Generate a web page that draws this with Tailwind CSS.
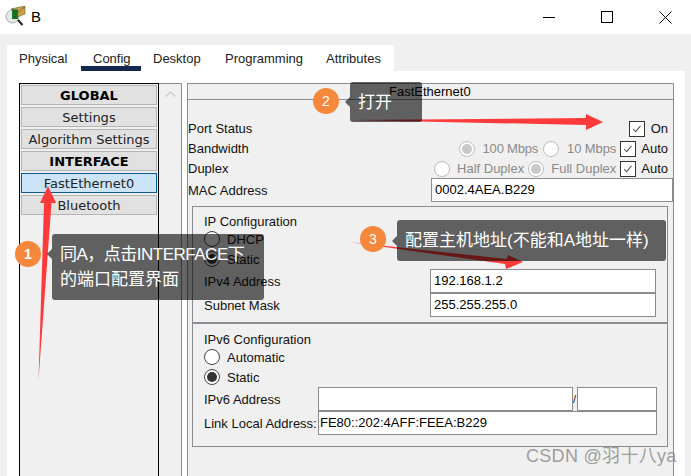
<!DOCTYPE html>
<html lang="zh">
<head>
<meta charset="utf-8">
<title>B</title>
<script src="https://cdn.jsdelivr.net/npm/@tailwindcss/browser@4"></script>
</head>
<body class="bg-[#f0f0f0]">
<div class="relative h-[476px] w-[691px] overflow-hidden bg-[#f0f0f0] font-['Liberation_Sans',sans-serif] text-[13px] text-[#111]">

  <!-- Title bar -->
  <header class="flex h-[34px] items-center justify-between bg-white">
    <div class="flex items-center">
      <svg class="ml-[5px] h-[22px] w-[22px]" viewBox="0 0 22 22">
        <circle cx="7.500" cy="10.500" r="6.500" fill="#e4e9e7" stroke="#a9b3b0"/>
        <path d="M13 14l4.500 5" stroke="#222" stroke-width="2"/>
        <path d="M6 3l14-3v8l-8 3z" fill="#c9a14f" stroke="#6d5a2a" stroke-width=".6"/>
        <path d="M7 2.500l6 4 7-6" fill="none" stroke="#6d5a2a" stroke-width=".8"/>
        <path d="M7 3.500h6v9.500h-6z" fill="#1c7a2b"/>
        <path d="M9 4v9M11 4v9" stroke="#0c3d14" stroke-width=".8" stroke-dasharray="1 1"/>
      </svg>
      <span class="ml-[4px] text-[15px] text-black">B</span>
    </div>
    <div class="mr-[19px] flex items-center gap-[46px]">
      <span class="h-px w-[12px] bg-black"></span>
      <span class="h-[12px] w-[12px] border border-black"></span>
      <svg class="h-[13px] w-[13px]" viewBox="0 0 13 13"><path d="M.5.5l12 12M12.500.5l-12 12" stroke="#000" fill="none"/></svg>
    </div>
  </header>

  <!-- Tabs -->
  <nav class="mt-[11px] ml-[7px] flex h-[26px] w-[387px] bg-white pt-[4px] text-[#222]">
    <span class="ml-[12px] w-[50px]">Physical</span>
    <span class="relative ml-[24px] w-[36px]">Config<span class="absolute top-[17px] left-[-12px] h-[5px] w-[60px] bg-[#14284f]"></span></span>
    <span class="ml-[24px] w-[48px]">Desktop</span>
    <span class="ml-[24px] w-[77px]">Programming</span>
    <span class="ml-[24px] w-[55px]">Attributes</span>
  </nav>

  <!-- Main panel -->
  <main class="ml-[7px] flex h-[405px] w-[678px] bg-white pt-[12px] pl-[12px]">

    <!-- Left list -->
    <aside class="flex h-[500px] w-[140px] flex-col gap-[2px] border border-black bg-[#f0f0f0] p-px font-['DejaVu_Sans',sans-serif] text-[13px] leading-[20px] text-[#222]">
      <div class="h-[20px] border border-[#b5b5b5] bg-[#e1e1e1] text-center font-bold text-black">GLOBAL</div>
      <div class="h-[20px] border border-[#b5b5b5] bg-[#e1e1e1] text-center">Settings</div>
      <div class="h-[20px] border border-[#b5b5b5] bg-[#e1e1e1] text-center">Algorithm Settings</div>
      <div class="h-[20px] border border-[#b5b5b5] bg-[#e1e1e1] text-center font-bold text-black">INTERFACE</div>
      <div class="h-[20px] border border-[#0a5a96] bg-[#cce4f7] text-center">FastEthernet0</div>
      <div class="h-[20px] border border-[#b5b5b5] bg-[#e1e1e1] text-center">Bluetooth</div>
    </aside>

    <!-- Scroll column -->
    <div class="flex h-[500px] w-[23px] justify-center border-t border-r border-[#8a8c92] bg-[#f0f0f0] pt-[7px]">
      <svg class="h-[6px] w-[11px]" viewBox="0 0 11 6"><path d="M.7 5.500l4.800-4.500 4.800 4.500" fill="none" stroke="#cdcdcd" stroke-width="1.500"/></svg>
    </div>

    <!-- Right form -->
    <section class="ml-[5px] h-[500px] w-[487px] border-t border-r border-l border-[#8a8c92] bg-[#f0f0f0] leading-[17px]">
      <div class="h-[16px] border-b border-[#8a8c92] bg-[#f0f0f0] pl-[201px] text-[13px] leading-[16px] text-black">FastEthernet0</div>

      <div class="mt-[18px] flex h-[20px] items-center justify-between pt-px">
        <span>Port Status</span>
        <div class="mr-[5px] flex items-center gap-[6px]">
          <svg class="h-[16px] w-[16px] border border-[#333] bg-white" viewBox="0 0 16 16"><path d="M3.500 8l3 3 5.500-6.500" fill="none" stroke="#555" stroke-width="1.200"/></svg>
          <span>On</span>
        </div>
      </div>

      <div class="flex h-[20px] items-center pt-px">
        <span class="mr-auto">Bandwidth</span>
        <span class="flex h-[16px] w-[16px] items-center justify-center rounded-full border border-[#bbb] bg-white"><span class="h-[10px] w-[10px] rounded-full bg-[#c8c8c8]"></span></span>
        <span class="ml-[8px] tracking-[-0.2px] text-[#8a8a8a]">100 Mbps</span>
        <span class="ml-[5px] h-[16px] w-[16px] rounded-full border border-[#bbb] bg-white"></span>
        <span class="ml-[8px] tracking-[-0.1px] text-[#8a8a8a]">10 Mbps</span>
        <svg class="ml-[4px] h-[16px] w-[16px] border border-[#333] bg-white" viewBox="0 0 16 16"><path d="M3.500 8l3 3 5.500-6.500" fill="none" stroke="#555" stroke-width="1.200"/></svg>
        <span class="mr-[5px] ml-[5px]">Auto</span>
      </div>

      <div class="flex h-[20px] items-center pt-px">
        <span class="mr-auto">Duplex</span>
        <span class="h-[16px] w-[16px] rounded-full border border-[#bbb] bg-white"></span>
        <span class="ml-[7px] text-[#8a8a8a]">Half Duplex</span>
        <span class="ml-[4px] flex h-[16px] w-[16px] items-center justify-center rounded-full border border-[#bbb] bg-white"><span class="h-[10px] w-[10px] rounded-full bg-[#c8c8c8]"></span></span>
        <span class="ml-[7px] text-[#8a8a8a]">Full Duplex</span>
        <svg class="ml-[4px] h-[16px] w-[16px] border border-[#333] bg-white" viewBox="0 0 16 16"><path d="M3.500 8l3 3 5.500-6.500" fill="none" stroke="#555" stroke-width="1.200"/></svg>
        <span class="mr-[5px] ml-[5px]">Auto</span>
      </div>

      <div class="flex h-[24px] items-center justify-between">
        <span class="pt-px">MAC Address</span>
        <div class="h-[24px] w-[242px] border border-[#8a8c92] bg-white pl-[3px] leading-[22px] text-black">0002.4AEA.B229</div>
      </div>

      <!-- IP Configuration -->
      <div class="mt-[4px] mr-[5px] ml-[4px] h-[118px] border border-b-2 border-[#8a8c92] pl-[11px]">
        <div class="flex h-[22px] items-center pt-[6px]">IP Configuration</div>
        <div class="flex h-[20px] items-center">
          <span class="h-[16px] w-[16px] rounded-full border border-[#444] bg-white"></span>
          <span class="ml-[7px]">DHCP</span>
        </div>
        <div class="flex h-[20px] items-center">
          <span class="flex h-[16px] w-[16px] items-center justify-center rounded-full border border-[#444] bg-white"><span class="h-[10px] w-[10px] rounded-full bg-[#333]"></span></span>
          <span class="ml-[7px]">Static</span>
        </div>
        <div class="flex h-[24px] items-center justify-between pr-[11px]">
          <span>IPv4 Address</span>
          <div class="h-[24px] w-[226px] border border-[#8a8c92] bg-white pl-[3px] leading-[22px] text-black">192.168.1.2</div>
        </div>
        <div class="flex h-[24px] items-center justify-between pr-[11px]">
          <span>Subnet Mask</span>
          <div class="h-[24px] w-[226px] border border-[#8a8c92] bg-white pl-[3px] leading-[22px] text-black">255.255.255.0</div>
        </div>
      </div>

      <!-- IPv6 Configuration -->
      <div class="mr-[5px] ml-[4px] h-[123px] border border-t-0 border-[#8a8c92] pl-[11px]">
        <div class="flex h-[23px] items-center pt-[7px]">IPv6 Configuration</div>
        <div class="flex h-[20px] items-center">
          <span class="h-[16px] w-[16px] rounded-full border border-[#444] bg-white"></span>
          <span class="ml-[7px]">Automatic</span>
        </div>
        <div class="flex h-[20px] items-center">
          <span class="flex h-[16px] w-[16px] items-center justify-center rounded-full border border-[#444] bg-white"><span class="h-[10px] w-[10px] rounded-full bg-[#333]"></span></span>
          <span class="ml-[7px]">Static</span>
        </div>
        <div class="flex h-[24px] items-center">
          <span class="w-[114px]">IPv6 Address</span>
          <div class="h-[24px] w-[255px] border border-[#8a8c92] bg-white"></div>
          <span class="w-[4px] text-[11px]">/</span>
          <div class="h-[24px] w-[80px] border border-[#8a8c92] bg-white"></div>
        </div>
        <div class="flex h-[24px] items-center">
          <span class="w-[114px] whitespace-nowrap">Link Local Address:</span>
          <div class="h-[24px] w-[339px] border border-[#8a8c92] bg-white pl-px leading-[22px] text-black">FE80::202:4AFF:FEEA:B229</div>
        </div>
      </div>
    </section>
  </main>

  <!-- Red annotation arrows -->
  <svg class="absolute top-0 left-0 h-[476px] w-[691px]" viewBox="0 0 691 476">
    <path d="M48 186L56 203L51.500 203L38.500 380L44 203L40 203Z" fill="#ff3a3a"/>
    <path d="M350 120L586 118L586 114L603 122L586 130L586 125Z" fill="#ff3a3a"/>
    <path d="M349 242L507 259L508 255L523 262L506 269L505 264Z" fill="#ff3a3a"/>
  </svg>

  <!-- Callout 1 -->
  <div class="absolute top-[241px] left-[15px] h-[26px] w-[26px] rounded-full bg-[#f5883a] text-center text-[14px] leading-[26px] font-bold text-white">1</div>
  <div class="absolute top-[249px] left-[47px] h-0 w-0 border-y-[5px] border-r-[5px] border-y-transparent border-r-black/60"></div>
  <div class="absolute top-[234px] left-[52px] h-[66px] w-[212px] rounded-[3px] bg-black/60 px-[8px] py-[8px] font-['Liberation_Sans','Noto_Sans_CJK_SC',sans-serif] text-[17px] leading-[25px] tracking-[-0.5px] whitespace-nowrap text-white">同A，点击INTERFACE下<br><span class="tracking-normal">的端口配置界面</span></div>

  <!-- Callout 2 -->
  <div class="absolute top-[88px] left-[313px] h-[26px] w-[26px] rounded-full bg-[#f5883a] text-center text-[14px] leading-[26px] text-white">2</div>
  <div class="absolute top-[97px] left-[345px] h-0 w-0 border-y-[5px] border-r-[5px] border-y-transparent border-r-black/60"></div>
  <div class="absolute top-[82px] left-[350px] h-[40px] w-[72px] rounded-[3px] bg-black/60 px-[8px] py-[8px] font-['Liberation_Sans','Noto_Sans_CJK_SC',sans-serif] text-[17px] leading-[25px] text-white">打开</div>

  <!-- Callout 3 -->
  <div class="absolute top-[226px] left-[360px] h-[26px] w-[26px] rounded-full bg-[#f5883a] text-center text-[14px] leading-[26px] text-white">3</div>
  <div class="absolute top-[236px] left-[392px] h-0 w-0 border-y-[5px] border-r-[5px] border-y-transparent border-r-black/60"></div>
  <div class="absolute top-[220px] left-[397px] h-[41px] w-[269px] rounded-[3px] bg-black/60 px-[8px] py-[8px] font-['Liberation_Sans','Noto_Sans_CJK_SC',sans-serif] text-[17px] leading-[25px] whitespace-nowrap text-white">配置主机地址(不能和A地址一样)</div>

  <!-- Watermark -->
  <div class="absolute top-[444px] left-[526px] font-['Liberation_Sans','Noto_Sans_CJK_SC',sans-serif] text-[18px] leading-[24px] tracking-[0.3px] whitespace-nowrap text-[#8d8d8d]/85">CSDN @羽十八ya</div>
</div>
</body>
</html>
